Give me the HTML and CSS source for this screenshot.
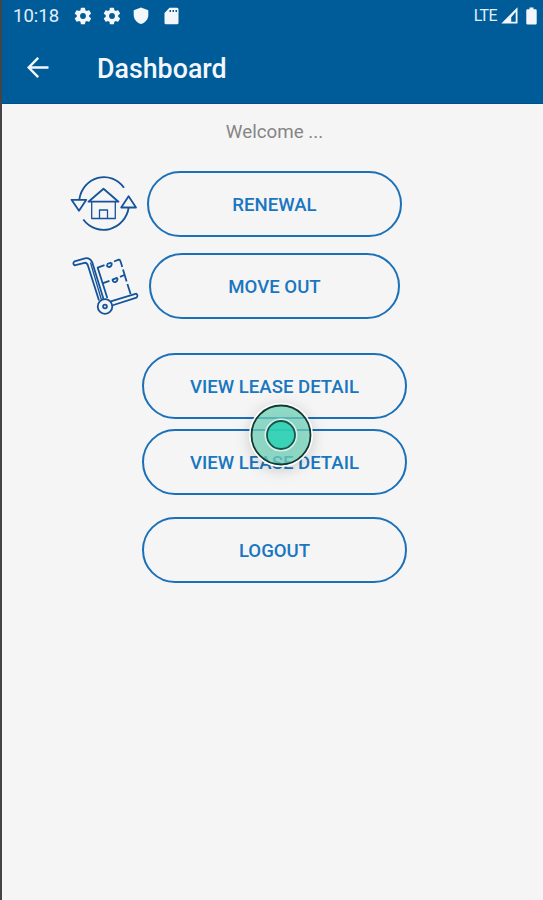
FILE: index.html
```html
<!doctype html>

<html lang="en">
    <head>
        <meta charset="utf-8">
        <title>Dashboard</title>
        <link rel="stylesheet" href="styles.css">
    </head>
    <body>
        <div class="screen">
            <header>
                <!-- Status bar -->
                <div class="status">
                    <span class="clock">10:18</span>
                    <svg class="gear" width="20" height="20" viewBox="0 0 24 24"><path d="M19.4 13a7.500 7.500 0 0 0 0-2l2.100-1.600a.5.5 0 0 0 .1-.6l-2-3.500a.5.5 0 0 0-.6-.2l-2.500 1a7.300 7.300 0 0 0-1.700-1l-.4-2.600a.5.5 0 0 0-.5-.5h-4a.5.5 0 0 0-.5.4L9 5.100a7.700 7.700 0 0 0-1.700 1l-2.500-1a.5.5 0 0 0-.6.200l-2 3.500a.5.5 0 0 0 .1.600L4.500 11a8 8 0 0 0 0 2l-2.200 1.600a.5.5 0 0 0-.1.600l2 3.500c.1.200.4.300.6.200l2.500-1a7.300 7.300 0 0 0 1.700 1l.4 2.600c0 .3.200.5.500.5h4c.3 0 .5-.2.500-.4l.4-2.700a7.700 7.700 0 0 0 1.700-1l2.500 1c.2.100.5 0 .6-.2l2-3.500a.5.5 0 0 0-.1-.6zM12 15.500a3.500 3.500 0 1 1 0-7 3.500 3.500 0 0 1 0 7z"/></svg>
                    <svg class="gear" width="20" height="20" viewBox="0 0 24 24"><path d="M19.4 13a7.500 7.500 0 0 0 0-2l2.100-1.600a.5.5 0 0 0 .1-.6l-2-3.500a.5.5 0 0 0-.6-.2l-2.500 1a7.300 7.300 0 0 0-1.700-1l-.4-2.600a.5.5 0 0 0-.5-.5h-4a.5.5 0 0 0-.5.4L9 5.100a7.700 7.700 0 0 0-1.700 1l-2.500-1a.5.5 0 0 0-.6.200l-2 3.500a.5.5 0 0 0 .1.600L4.500 11a8 8 0 0 0 0 2l-2.200 1.600a.5.5 0 0 0-.1.600l2 3.500c.1.200.4.300.6.200l2.500-1a7.300 7.300 0 0 0 1.700 1l.4 2.600c0 .3.200.5.500.5h4c.3 0 .5-.2.500-.4l.4-2.700a7.700 7.700 0 0 0 1.700-1l2.500 1c.2.100.5 0 .6-.2l2-3.500a.5.5 0 0 0-.1-.6zM12 15.500a3.500 3.500 0 1 1 0-7 3.500 3.500 0 0 1 0 7z"/></svg>
                    <svg class="shield" width="16" height="18" viewBox="0 0 16 18"><path d="M8 .5 15.300 3.300V8c0 4.300-3 7.700-7.300 9C3.700 15.700.7 12.300.7 8V3.300z"/></svg>
                    <svg class="sdcard" width="15" height="18" viewBox="0 0 15 18"><path fill-rule="evenodd" d="M5.500.8H13a1.500 1.500 0 0 1 1.500 1.500v13.400a1.500 1.500 0 0 1-1.500 1.500H2a1.500 1.500 0 0 1-1.500-1.500V6zM5.500 3v2H7V3zm3 0v2H10V3zm3 0v2H13V3z"/></svg>
                    <span class="network">LTE</span>
                    <svg class="signal" width="17" height="17" viewBox="0 0 17 17"><path fill-rule="evenodd" d="M16.500.3v16.200H.3zM14.700 5l-4.500 5.200v4.500h4.500z"/></svg>
                    <svg class="battery" width="11" height="18" viewBox="0 0 11 18"><path d="M3.500.5h4v1.700h2a1.200 1.200 0 0 1 1.200 1.200v12.800a1.200 1.200 0 0 1-1.200 1.200h-8a1.200 1.200 0 0 1-1.200-1.200V3.400a1.200 1.200 0 0 1 1.200-1.200h2z"/></svg>
                </div>
                <!-- App bar -->
                <div class="appbar">
                    <svg class="back" width="22" height="22" viewBox="0 0 22 22"><path d="M21.500 10.500H2M11.200.8 1.700 10.500l9.500 9.700"/></svg>
                    <h1>Dashboard</h1>
                </div>
            </header>

            <main>
                <p class="welcome">Welcome ...</p>

                <div class="row">
                    <!-- House with arrows around it -->
                    <svg class="icon" width="72" height="66" viewBox="68 171 72 66">
                        <path d="M79.300 199.500A25 26.500 0 0 1 124 187.700M83.300 219.500A25.500 26.500 0 0 0 128.700 207.500"/>
                        <path d="M71.500 199.800H86.300L79 210.800zM121.200 207.500H136L128.600 196.300z"/>
                        <path d="M88.500 201.700 103.500 188.700 118.500 201.700z"/>
                        <path class="thin" d="M91.700 202V218.500H115.300V202M99.500 218.500V210H107.500V218.500"/>
                    </svg>
                    <button class="renewal">RENEWAL</button>
                </div>

                <div class="row">
                    <!-- Hand truck with boxes -->
                    <svg class="icon" width="72" height="66" viewBox="68 253 72 66">
                        <path d="M103.500 299 92.300 262.500Q90 257.500 85 258.300L74.500 261.300Q72.200 263.500 74.500 265.300L84.500 262.800Q87 262.500 88 265.800L99 300.500"/>
                        <path class="thin" d="M90.500 262.500 101.300 299.500"/>
                        <path d="M112 305.500 136.500 297.600Q138.500 295.300 136.300 293.700L110.800 301.300"/>
                        <path d="M107.300 298 97.700 267.700 104.500 265.200M107 264.200 111.500 262.500M114 261.500 118.700 259.700Q120 259.400 120.400 261L122.300 267M123 269.500 126.600 281.500M127.400 284 130.600 294"/>
                        <path d="M103 283.200 109.500 280.800M112 279.800 117.500 277.700M120 276.800 124.500 275"/>
                        <path d="M106.700 264.500C107.500 268.800 112.500 267 111.500 262.700M112.400 279.700C113.200 284 118.200 282.200 117.300 278"/>
                        <circle cx="105" cy="306.500" r="7.300"/>
                        <circle cx="105" cy="306.500" r="1.900"/>
                    </svg>
                    <button class="moveout">MOVE OUT</button>
                </div>

                <button class="lease">VIEW LEASE DETAIL</button>
                <button class="lease">VIEW LEASE DETAIL</button>
                <button class="logout">LOGOUT</button>
            </main>

            <!-- Touch indicator, floats over the buttons -->
            <svg class="touch" width="80" height="80" viewBox="-40 -40 80 80">
                <circle class="halo" r="31"/>
                <circle class="outer" r="29.500"/>
                <circle class="ring" r="15.500"/>
                <circle class="inner" r="14"/>
            </svg>
        </div>
    </body>
</html>
```

FILE: styles.css
```css
* { box-sizing: border-box; }
body {
    margin: 0;
    font-family: Roboto, sans-serif;
    background: #f5f5f5;
}
.screen {
    position: relative;
    height: 900px;
    overflow: hidden;
    border-left: 2px solid #434446;
}

header {
    height: 104px;
    background: #005c99;
    border-bottom: 1px solid #004f8b;
    color: #f3f7fc;
}
.status {
    display: flex;
    align-items: center;
    height: 31px;
    padding: 0 6px 0 11px;
    fill: #f3f7fc;
}
.clock {
    width: 48px;
    margin-right: 12px;
    font-size: 18.5px;
    color: #e2eefa;
}
.gear { margin-right: 9px; }
.shield { margin: 0 15px 0 2px; }
.network {
    margin-left: auto;
    font-size: 16px;
    letter-spacing: -0.6px;
    color: #e2eefa;
}
.signal { margin: 0 8px 0 4px; }
.appbar {
    display: flex;
    align-items: center;
    height: 73px;
    padding-left: 25px;
}
.back {
    fill: none;
    stroke: #f3f7fc;
    stroke-width: 2.4;
}
h1 {
    margin: 2px 0 0 48px;
    font-size: 26.8px;
    font-weight: 500;
}

main {
    display: flex;
    flex-direction: column;
    align-items: center;
    padding-left: 4px;
}
.welcome {
    margin: 17px 0 27px;
    font-size: 18.8px;
    line-height: 23px;
    color: #858585;
}
.row {
    display: flex;
    align-self: stretch;
    margin: 0 0 16px 62px;
}
.icon {
    fill: none;
    stroke: #15539a;
    stroke-width: 1.8;
    stroke-linejoin: round;
}
.icon .thin { stroke-width: 1.3; }

button {
    width: 265px;
    height: 66px;
    padding: 1px 0 0;
    border: 2px solid #1b70b8;
    border-radius: 33px;
    background: transparent;
    color: #1976c0;
    font: 500 18.6px Roboto, sans-serif;
}
.renewal {
    width: 255px;
    margin-left: 7px;
}
.moveout {
    width: 251px;
    margin-left: 9px;
}
.row + .lease { margin-top: 18px; }
.lease + .lease { margin-top: 10px; }
.logout { margin-top: 22px; }

.touch {
    position: absolute;
    left: 239px;
    top: 395px;
    overflow: visible;
    filter: drop-shadow(0 3px 7px rgba(0, 0, 0, 0.2));
}
.halo {
    fill: none;
    stroke: #ffffff;
    stroke-width: 2;
}
.outer {
    fill: rgba(115, 215, 190, 0.72);
    stroke: #12382f;
    stroke-width: 1.8;
}
.ring {
    fill: none;
    stroke: #d8f0ea;
    stroke-width: 2;
}
.inner {
    fill: rgba(30, 210, 180, 0.75);
    stroke: #17564b;
    stroke-width: 1.8;
}
```
